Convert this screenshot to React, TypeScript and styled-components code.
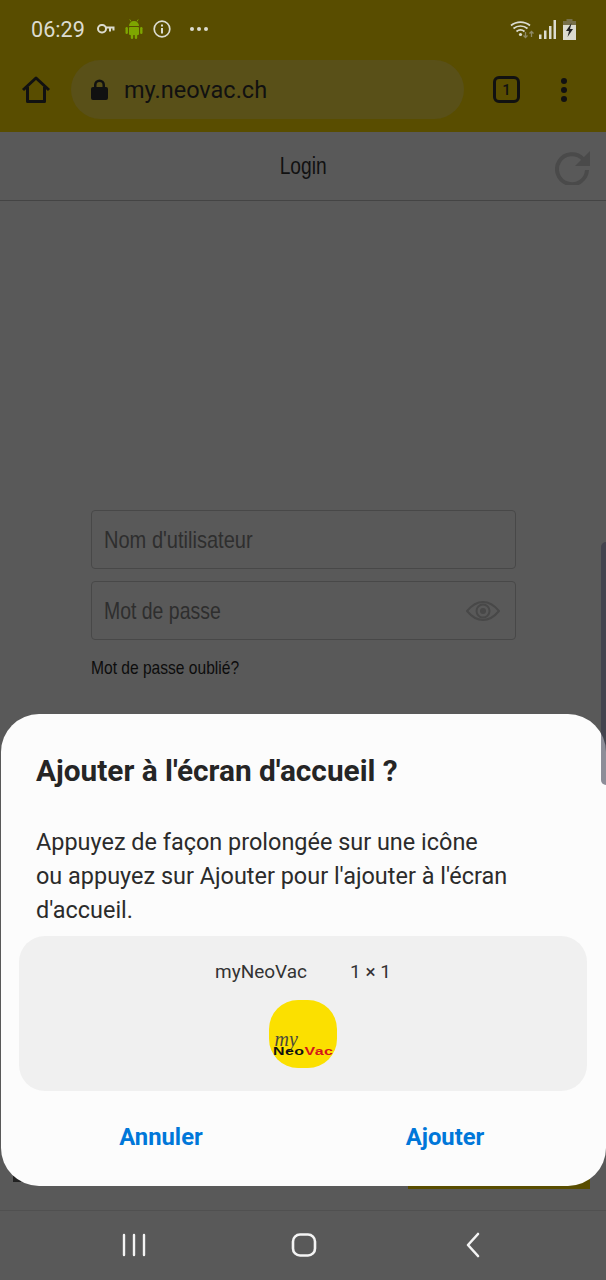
import React from 'react';
import styled, { createGlobalStyle } from 'styled-components';

const GlobalStyle = createGlobalStyle`
  html, body {
    margin: 0;
    padding: 0;
    background: #595959;
  }
  * {
    box-sizing: border-box;
  }
`;

const Screen = styled.div`
  position: relative;
  width: 606px;
  height: 1280px;
  overflow: hidden;
  display: flex;
  flex-direction: column;
  background: #595959;
  font-family: Roboto, "Liberation Sans", sans-serif;
`;

const StatusBar = styled.div`
  height: 60px;
  flex: none;
  display: flex;
  align-items: center;
  padding: 0 30px 2px 31px;
  background: #594d00;
  color: #dcdcd0;
`;

const Clock = styled.span`
  font-size: 21.6px;
  margin-right: 12px;
`;

const StatusIcons = styled.div`
  display: flex;
  align-items: center;
  gap: 10px;
`;

const StatusRight = styled.div`
  margin-left: auto;
  display: flex;
  align-items: center;
  gap: 5px;
`;

const Toolbar = styled.div`
  height: 72px;
  flex: none;
  display: flex;
  align-items: center;
  padding: 0 27px 13px 21px;
  background: #594d00;
  color: #111;
`;

const UrlPill = styled.div`
  width: 393px;
  height: 59px;
  margin-left: 20px;
  margin-right: 29px;
  display: flex;
  align-items: center;
  gap: 16px;
  padding-left: 20px;
  border-radius: 30px;
  background: #595018;
  font-size: 23.5px;
`;

const TabCount = styled.div`
  width: 27px;
  height: 27px;
  flex: none;
  display: flex;
  align-items: center;
  justify-content: center;
  border: 3px solid #111;
  border-radius: 6px;
  font-size: 15px;
  font-weight: 500;
`;

const MenuDots = styled.div`
  margin-left: 41px;
  display: flex;
  flex-direction: column;
  gap: 3px;
  i {
    width: 6px;
    height: 6px;
    border-radius: 50%;
    background: #111;
  }
`;

const PageHeader = styled.div`
  position: relative;
  height: 69px;
  flex: none;
  display: flex;
  align-items: center;
  justify-content: center;
  border-bottom: 1px solid #444;
  color: #111;
  font-family: "Liberation Sans", sans-serif;
  font-size: 23px;
`;

const Narrow = styled.span<{ $origin?: string; $scale?: number }>`
  display: inline-block;
  white-space: nowrap;
  transform: scaleX(${(p) => p.$scale || 0.835});
  transform-origin: ${(p) => p.$origin || 'left center'};
`;

const Reload = styled.svg`
  position: absolute;
  right: 15px;
  top: 17px;
`;

const LoginForm = styled.div`
  width: 425px;
  margin: 309px 0 0 91px;
  display: flex;
  flex-direction: column;
  gap: 12px;
  font-family: "Liberation Sans", sans-serif;
`;

const Field = styled.div`
  height: 59px;
  display: flex;
  align-items: center;
  justify-content: space-between;
  padding: 0 15px 0 12px;
  border: 1px solid #484848;
  border-radius: 4px;
  color: #2e2e2e;
  font-size: 24px;
`;

const Forgot = styled.div`
  margin-top: 5px;
  color: #0c0c0c;
  font-size: 19px;
`;

const ScrollThumb = styled.div`
  position: absolute;
  right: 0;
  top: 542px;
  z-index: 2;
  width: 5px;
  height: 243px;
  border-radius: 5px 0 0 5px;
  background: rgba(49, 49, 69, 0.55);
`;

const HiddenButton = styled.div`
  position: absolute;
  left: 408px;
  top: 1150px;
  width: 182px;
  height: 39px;
  background: #594d00;
`;

const HiddenMark = styled.div`
  position: absolute;
  left: 13px;
  top: 1176px;
  width: 8px;
  height: 6px;
  background: #222;
`;

const Dialog = styled.div`
  position: absolute;
  left: 1px;
  top: 714px;
  width: 605px;
  height: 472px;
  padding: 0 19px 0 18px;
  display: flex;
  flex-direction: column;
  border-radius: 38px;
  background: #fcfcfc;
`;

const DialogTitle = styled.h2`
  margin: 37px 0 0 17px;
  color: #252525;
  font-size: 29.8px;
  line-height: 40px;
  font-weight: 700;
`;

const DialogText = styled.p`
  margin: 34px 0 0 17px;
  color: #2b2b2b;
  font-size: 23.45px;
  line-height: 34px;
`;

const WidgetPreview = styled.div`
  height: 155px;
  margin-top: 9px;
  display: flex;
  flex-direction: column;
  align-items: center;
  border-radius: 26px;
  background: #f0f0f0;
`;

const WidgetLabel = styled.div`
  margin-top: 25px;
  display: flex;
  gap: 43px;
  color: #333;
  font-size: 19px;
  line-height: 22px;
`;

const AppIcon = styled.div`
  position: relative;
  width: 68px;
  height: 68px;
  margin: 17px 1px 0 0;
  overflow: hidden;
  border-radius: 29px;
  background: #fbe000;
`;

const LogoMy = styled.span`
  position: absolute;
  left: 6px;
  top: 33px;
  color: #4a4a3a;
  font-family: "Liberation Serif", serif;
  font-style: italic;
  font-size: 20px;
  line-height: 13px;
`;

const LogoName = styled.span`
  position: absolute;
  left: 4px;
  top: 46px;
  color: #111;
  font-family: "Liberation Sans", sans-serif;
  font-weight: 700;
  font-size: 11px;
  line-height: 11px;
  letter-spacing: 0.3px;
  white-space: nowrap;
  transform: scaleX(1.45);
  transform-origin: left center;
  b {
    color: #d3151a;
  }
`;

const DialogActions = styled.div`
  display: grid;
  grid-template-columns: 284px 284px;
  margin-top: 29px;
`;

const ActionButton = styled.button`
  border: 0;
  padding: 0;
  background: none;
  color: #0077d9;
  font-family: Roboto, sans-serif;
  font-size: 23.8px;
  line-height: 34px;
  font-weight: 700;
`;

const NavBar = styled.div`
  position: absolute;
  left: 0;
  right: 0;
  bottom: 0;
  height: 70px;
  display: grid;
  grid-template-columns: 267px 73px 267px;
  align-items: center;
  justify-items: center;
  border-top: 1px solid #505050;
  padding-bottom: 1px;
`;

const NavSlot = styled.div<{ $justify?: string; $left?: number; $right?: number }>`
  width: 100%;
  display: flex;
  justify-content: ${(p) => p.$justify || 'center'};
  padding: 0 ${(p) => p.$right || 0}px 0 ${(p) => p.$left || 0}px;
`;

export default function App() {
  return (
    <>
      <GlobalStyle />
      <Screen>
        <StatusBar>
          <Clock>06:29</Clock>
          <StatusIcons>
            <svg width="18" height="10" viewBox="0 0 18 10" fill="none" stroke="#dcdcd0" strokeWidth="2">
              <rect x="1" y="1" width="8" height="7.500" rx="3.700" />
              <path d="M9 3.500h8.500M13 3.500v4M16.500 3.500v3" />
            </svg>
            <svg width="18" height="20" viewBox="0 0 18 20" fill="#7ea600">
              <path d="M4 7a5 5 0 0 1 10 0z" />
              <path d="M6 2.500L4.800 .5M12 2.500l1.200-2" stroke="#7ea600" strokeWidth="1" />
              <rect x="4" y="8" width="10" height="8" rx="1" />
              <rect x="0.500" y="8" width="2.400" height="7" rx="1.200" />
              <rect x="15.100" y="8" width="2.400" height="7" rx="1.200" />
              <rect x="5.800" y="15" width="2.400" height="5" rx="1.200" />
              <rect x="9.800" y="15" width="2.400" height="5" rx="1.200" />
            </svg>
            <svg width="18" height="18" viewBox="0 0 18 18" fill="none" stroke="#dcdcd0" strokeWidth="1.700">
              <circle cx="9" cy="9" r="7.800" />
              <path d="M9 8v5.500M9 4.400v2" strokeWidth="2" />
            </svg>
            <svg width="20" height="6" viewBox="0 0 20 6" fill="#dcdcd0" style={{ marginLeft: 8 }}>
              <circle cx="3" cy="3" r="2" />
              <circle cx="10" cy="3" r="2" />
              <circle cx="17" cy="3" r="2" />
            </svg>
          </StatusIcons>
          <StatusRight>
            <svg width="24" height="20" viewBox="0 0 24 20" fill="none" stroke="#dcdcd0" strokeWidth="1.700">
              <path d="M1 6.500a15 15 0 0 1 19 0M3.500 9.500a11 11 0 0 1 14 0M6.500 12.500a6.500 6.500 0 0 1 8 0" />
              <circle cx="10.500" cy="15.500" r="1.600" fill="#dcdcd0" stroke="none" />
              <path d="M15.500 13v5.500M13.500 16.500l2 2 2-2M21.500 18v-5.500M19.500 14.500l2-2 2 2" stroke="#8f8a66" strokeWidth="1.300" />
            </svg>
            <svg width="17" height="19" viewBox="0 0 17 19" fill="#dcdcd0">
              <path d="M0 14.500h2.500V19H0zM5 10.500h2.500V19H5zM10 6h2.500v13H10zM14.500 0H17v19h-2.500z" />
            </svg>
            <svg width="13" height="21" viewBox="0 0 13 21" style={{ marginLeft: 2 }}>
              <path d="M3.500 0h6v2H13v19H0V2h3.500z" fill="#77704a" />
              <path d="M0 6h13v15H0z" fill="#dcdcd0" />
              <path d="M8.500 4L3 12h3l-1.500 6L10 10H7z" fill="#222" />
            </svg>
          </StatusRight>
        </StatusBar>

        <Toolbar>
          <svg width="30" height="30" viewBox="0 0 30 30" fill="none" stroke="#111" strokeWidth="3" strokeLinejoin="round">
            <path d="M2 15L15 3l13 12M6.500 12v14.500h17V12" />
          </svg>
          <UrlPill>
            <svg width="17" height="21" viewBox="0 0 17 21" fill="#111">
              <path d="M3 8V6a5.500 5.500 0 0 1 11 0v2h1a2 2 0 0 1 2 2v9a2 2 0 0 1-2 2H2a2 2 0 0 1-2-2v-9a2 2 0 0 1 2-2zm2.500 0h6V6a3 3 0 0 0-6 0z" />
            </svg>
            my.neovac.ch
          </UrlPill>
          <TabCount>1</TabCount>
          <MenuDots>
            <i />
            <i />
            <i />
          </MenuDots>
        </Toolbar>

        <PageHeader>
          <Narrow $origin="center">Login</Narrow>
          <Reload width="36" height="36" viewBox="0 0 36 36" fill="none">
            <path d="M28 10A15 15 0 1 0 32 21" stroke="#4a4a4a" strokeWidth="4" />
            <path d="M35 2v15H20z" fill="#4a4a4a" />
          </Reload>
        </PageHeader>

        <LoginForm>
          <Field>
            <Narrow>Nom d'utilisateur</Narrow>
          </Field>
          <Field>
            <Narrow $scale={0.81}>Mot de passe</Narrow>
            <svg width="34" height="20" viewBox="0 0 34 20" fill="none" stroke="#484848" strokeWidth="2">
              <path d="M1 10C6 4 11 1 17 1s11 3 16 9c-5 6-10 9-16 9S6 16 1 10z" />
              <circle cx="17" cy="10" r="6.500" />
              <circle cx="17" cy="10" r="3" fill="#484848" stroke="none" />
            </svg>
          </Field>
          <Forgot>
            <Narrow $scale={0.82}>Mot de passe oublié?</Narrow>
          </Forgot>
        </LoginForm>

        <HiddenButton />
        <HiddenMark />

        <Dialog>
          <DialogTitle>Ajouter à l'écran d'accueil ?</DialogTitle>
          <DialogText>
            Appuyez de façon prolongée sur une icône
            <br />
            ou appuyez sur Ajouter pour l'ajouter à l'écran
            <br />
            d'accueil.
          </DialogText>
          <WidgetPreview>
            <WidgetLabel>
              <span>myNeoVac</span>
              <span>1 × 1</span>
            </WidgetLabel>
            <AppIcon>
              <LogoMy>my</LogoMy>
              <LogoName>
                Neo<b>Vac</b>
              </LogoName>
            </AppIcon>
          </WidgetPreview>
          <DialogActions>
            <ActionButton>Annuler</ActionButton>
            <ActionButton>Ajouter</ActionButton>
          </DialogActions>
        </Dialog>

        <ScrollThumb />

        <NavBar>
          <NavSlot $justify="flex-end" $right={121}>
            <svg width="24" height="24" viewBox="0 0 24 24" fill="none" stroke="#f4f4f4" strokeWidth="2.400" strokeLinecap="round">
              <path d="M2 2v20M12 2v20M22 2v20" />
            </svg>
          </NavSlot>
          <NavSlot>
            <svg width="26" height="26" viewBox="0 0 26 26" fill="none" stroke="#f4f4f4" strokeWidth="2.600">
              <rect x="2" y="2.500" width="22" height="21" rx="7" />
            </svg>
          </NavSlot>
          <NavSlot $justify="flex-start" $left={125}>
            <svg width="16" height="26" viewBox="0 0 16 26" fill="none" stroke="#f4f4f4" strokeWidth="2.600" strokeLinecap="round" strokeLinejoin="round">
              <path d="M13 2L3 13l10 11" />
            </svg>
          </NavSlot>
        </NavBar>
      </Screen>
    </>
  );
}
